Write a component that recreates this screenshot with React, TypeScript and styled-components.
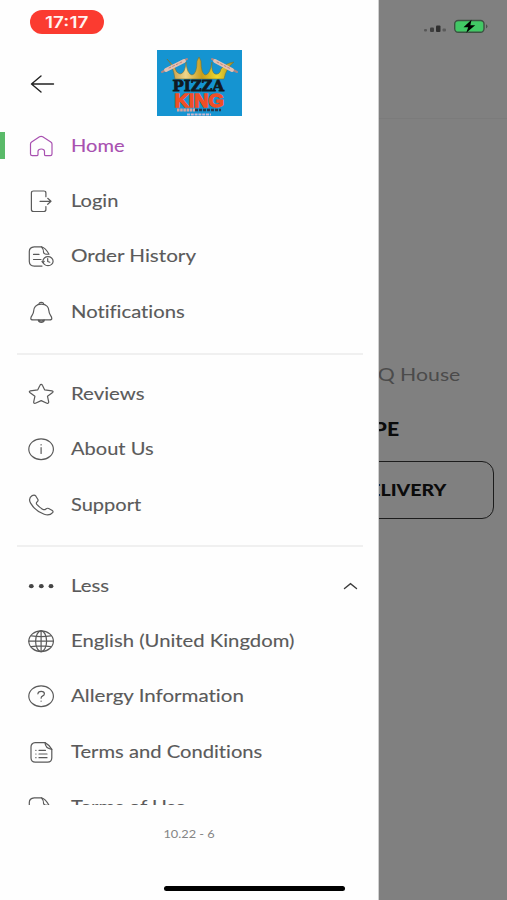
import React from "react";
import styled, { createGlobalStyle } from "styled-components";

const Global = createGlobalStyle`
  * { box-sizing: border-box; }
  html, body { margin: 0; padding: 0; background: #808080; }
  body { font-family: Lato, "Open Sans", sans-serif; font-variant-ligatures: none; }
`;

const Screen = styled.div`
  position: relative;
  width: 507px;
  height: 900px;
  overflow: hidden;
  background: #808080;
`;

const Wide = styled.span<{ $stretch?: number; $origin?: string }>`
  display: inline-block;
  white-space: nowrap;
  transform: scaleX(${(p) => p.$stretch ?? 1.18});
  transform-origin: ${(p) => p.$origin ?? "left"} center;
`;

/* Dimmed page behind the drawer */
const Page = styled.main`
  height: 100%;
  display: flex;
  flex-direction: column;
  align-items: flex-end;
`;

const PageHeader = styled.div`
  width: 100%;
  height: 119px;
  padding: 18px 19px 0 0;
  display: flex;
  justify-content: flex-end;
  align-items: flex-start;
  border-bottom: 1px solid #7b7b7b;
`;

const StoreName = styled.div`
  margin: 242px 47px 0 0;
  font-size: 18px;
  line-height: 26px;
  color: #4b4b4b;
`;

const OrderType = styled.div`
  margin: 29px 108px 0 0;
  font-size: 18px;
  font-weight: 900;
  line-height: 26px;
  color: #0b0b0b;
`;

const DeliveryButton = styled.button`
  margin: 19px 13px 0 0;
  width: 230px;
  height: 58px;
  padding: 0 47px 1px 0;
  border: 1.5px solid #1c1c1c;
  border-radius: 12px;
  background: transparent;
  text-align: right;
  font: 900 16px Lato, sans-serif;
  color: #0b0b0b;
`;

/* Drawer */
const Drawer = styled.aside`
  position: absolute;
  inset: 0 auto 0 0;
  width: 379px;
  display: flex;
  flex-direction: column;
  background: #fefefe;
  border-right: 1px solid #d0d0d0;
`;

const StatusRow = styled.div`
  height: 50px;
  padding: 10px 0 0 30px;
`;

const TimePill = styled.div`
  display: flex;
  align-items: center;
  justify-content: center;
  width: 74px;
  height: 24px;
  padding-top: 1px;
  border-radius: 12px;
  background: #fb3b30;
  color: #fff3f0;
  font: 600 15.5px/24px Inter, sans-serif;
`;

const Header = styled.header`
  display: flex;
  align-items: center;
  gap: 102px;
  height: 66px;
  margin-bottom: 2px;
  padding-left: 30px;
`;

const BackButton = styled.button`
  display: flex;
  padding: 2px 0 0;
  border: 0;
  background: none;
`;

const Menu = styled.nav`
  height: 687px;
  overflow: hidden;
`;

const Row = styled.div<{ $active?: boolean }>`
  display: flex;
  align-items: center;
  height: 55.36px;
  padding: 0 20px 0 ${(p) => (p.$active ? 0 : 27)}px;
  color: ${(p) => (p.$active ? "#a850b0" : "#5a5a5a")};
`;

const ActiveBar = styled.i`
  width: 5px;
  height: 27px;
  margin-right: 22px;
  background: #5aba69;
`;

const Icon = styled.svg`
  flex: none;
  width: 28px;
  height: 24px;
  margin-right: 16px;
  fill: none;
  stroke: currentColor;
  stroke-width: 1.2;
  stroke-linecap: round;
  stroke-linejoin: round;
`;

const Label = styled.div`
  flex: 1;
  font-size: 17px;
  line-height: 24px;
  -webkit-text-stroke: 0.12px currentColor;
`;

const Divider = styled.hr<{ $tight?: boolean }>`
  width: 346px;
  height: 2px;
  margin: ${(p) => (p.$tight ? "12.5px 0 11px 17px" : "14px 0 11px 17px")};
  border: 0;
  background: #f0f0f0;
`;

const Version = styled.div`
  margin-top: 20px;
  padding-left: 1px;
  text-align: center;
  font-size: 11.5px;
  line-height: 18px;
  color: #858585;
`;

const HomeIndicator = styled.div`
  position: absolute;
  left: 164px;
  bottom: 9px;
  width: 181px;
  height: 5px;
  border-radius: 3px;
  background: #000;
`;

const docOutline = (
  <>
    <path d="M14.5 2.8H7.2Q2.3 3.2 2.3 7.4V17.5Q2.5 22 7.2 22.1H15" />
    <path d="M14.5 2.8Q18.5 4 22 10.2 17.2 10.6 16.6 8.6 16.5 4.8 14.5 2.8Z" />
  </>
);

const icons: Record<string, React.ReactNode> = {
  home: (
    <path d="M3.5 10Q3.5 8.7 4.6 8L12.5 2.8Q14.1 1.8 15.7 2.8L23.8 8Q25 8.8 25 10V20Q25 21.7 23.2 21.7H18.9Q17.5 21.7 17.5 20.4V17.2Q17.3 15 14.3 15 11.2 15 11 17.2V20.4Q11 21.7 9.6 21.7H5.3Q3.5 21.7 3.5 20Z" />
  ),
  login: (
    <>
      <path d="M18.9 7.7V4Q18.9 2 16.8 2H6.5Q4.4 2 4.4 4V20.5Q4.4 22.5 6.5 22.5H16.8Q18.9 22.5 18.9 20.5V17.6" />
      <path d="M13 12.3H23.7M20.7 9.3L24 12.3 20.7 15.3" />
    </>
  ),
  history: (
    <>
      {docOutline}
      <path d="M6.5 10.4H12M6.5 15.5H14" />
      <ellipse cx="21" cy="17.2" rx="5.1" ry="4.5" />
      <path d="M20.7 14.7V17.5L22.8 18.2M15 17.5L16 18.7 17.2 17.4" />
    </>
  ),
  bell: (
    <>
      <path d="M12 4.5Q11.7 2.4 14.3 2.4 16.9 2.4 16.6 4.5" />
      <path d="M14.3 4.1C8.8 4.1 6.6 7.6 6.6 11.2 6.6 14.7 3.8 15.7 3.8 18.4Q3.8 19.8 6 19.8H22.6Q24.8 19.8 24.8 18.4C24.8 15.7 22 14.7 22 11.2 22 7.6 19.8 4.1 14.3 4.1Z" />
      <path d="M11.3 20.2Q11.7 22.4 14.3 22.4 16.9 22.4 17.3 20.2L14.3 21Z" />
    </>
  ),
  star: (
    <path d="M14.2 2.4Q15 2.4 15.4 3.3L17.6 7.8 25 8.8Q26.8 9.3 25.6 10.5L20.5 14.3 21.7 19.8Q21.8 21.8 19.9 21.2L14.2 18.6 8.4 21.2Q6.4 21.8 6.7 19.8L7.9 14.3 2.8 10.5Q1.6 9.3 3.4 8.8L10.8 7.8 13 3.3Q13.4 2.4 14.2 2.4Z" />
  ),
  info: (
    <>
      <ellipse cx="14.1" cy="12.2" rx="12.3" ry="10.4" />
      <path d="M14.1 10.7V16.4M14.1 7.6V8" />
    </>
  ),
  phone: (
    <path d="M5.2 2.6C2 4.7 1.8 7 3.6 10.1 6.4 15 11.8 19.4 17.2 21.3 20.8 22.6 23.6 22 25.6 19.6Q26.6 18.5 25.3 17.6L21.7 15.5Q20.3 14.8 18.9 16 17.4 17.3 15.6 16.2 12.3 14.3 9.8 11.4 8.7 9.9 10.2 8.8 11.5 7.8 10.9 6.5L8.9 3.2Q7.6 1.4 5.2 2.6Z" />
  ),
  dots: (
    <g fill="#454545" stroke="none">
      <ellipse cx="4.3" cy="12.2" rx="2.4" ry="2.1" />
      <ellipse cx="14.3" cy="12.2" rx="2.4" ry="2.1" />
      <ellipse cx="24" cy="12.2" rx="2.4" ry="2.1" />
    </g>
  ),
  globe: (
    <>
      <ellipse cx="14.1" cy="12.2" rx="12.3" ry="10.4" />
      <ellipse cx="14.1" cy="12.2" rx="5.5" ry="10.4" />
      <path d="M14.1 1.8V22.6M1.8 12.2H26.4M4.4 6.8Q14.1 8.4 23.8 6.8M4.4 17.6Q14.1 16 23.8 17.6" />
    </>
  ),
  question: (
    <>
      <ellipse cx="14.1" cy="12.2" rx="12.3" ry="10.4" />
      <path d="M10.9 9.8Q11.1 7.3 14.2 7.3 17.4 7.3 17.4 9.7 17.4 11.2 15.4 12.1 14.1 12.7 14.1 14.2M14.1 17V17.2" />
    </>
  ),
  list: (
    <>
      <path d="M18 2.6H8.2Q4 3 4 7V18Q4.2 22 8.2 22.2H20.6Q24.6 22 24.8 18V9.4Q22.5 5 18 2.6Z" />
      <path d="M18 2.6Q18.2 8.6 24.8 9.3M8.8 10.3H9M12 10.3H18.5M8.8 14H9M12 14H20M8.8 17.7H9M12 17.7H20" />
    </>
  ),
  doc: docOutline,
};

type Item = { icon: string; text: string; stretch?: number };

const sections: Item[][] = [
  [
    { icon: "home", text: "Home" },
    { icon: "login", text: "Login" },
    { icon: "history", text: "Order History", stretch: 1.215 },
    { icon: "bell", text: "Notifications", stretch: 1.19 },
  ],
  [
    { icon: "star", text: "Reviews", stretch: 1.2 },
    { icon: "info", text: "About Us" },
    { icon: "phone", text: "Support" },
  ],
  [
    { icon: "dots", text: "Less", stretch: 1.2 },
    { icon: "globe", text: "English (United Kingdom)", stretch: 1.192 },
    { icon: "question", text: "Allergy Information", stretch: 1.208 },
    { icon: "list", text: "Terms and Conditions", stretch: 1.187 },
    { icon: "doc", text: "Terms of Use", stretch: 1.187 },
  ],
];

const Logo = () => (
  <svg width="85" height="66" viewBox="0 0 85 66">
    <defs>
      <linearGradient id="gold" x1="0" x2="1" y1="0" y2="0">
        <stop offset="0" stopColor="#b88a32" />
        <stop offset=".28" stopColor="#eed58b" />
        <stop offset=".52" stopColor="#c79d1b" />
        <stop offset=".75" stopColor="#f0d92f" />
        <stop offset="1" stopColor="#a98b22" />
      </linearGradient>
    </defs>
    <rect width="85" height="66" fill="#1594d1" />
    <path
      d="M10 9Q16 15 18 29H67Q69 18 77 12 69 13 64 19 63 25 58 24 54 22 55 12Q53 25 48 25 44 23 44 11L42 7 40 11Q40 24 35 25 30 24 29 12 28 24 23 24 19 23 18 18 15 14 10 9Z"
      fill="url(#gold)"
      stroke="#6f743e"
      strokeWidth=".6"
    />
    <g strokeLinecap="round">
      <path d="M5 22L30 9M55 9L80 22" stroke="#a98787" strokeWidth="2" />
      <path d="M9 20L27 11M58 11L75 20" stroke="#e3c2b4" strokeWidth="3.8" />
      <path d="M12 18L26 11.5M60 12L74 19" stroke="#c08478" strokeWidth="1" strokeDasharray="2 2" />
    </g>
    <text x="15.5" y="40.5" fontFamily="DejaVu Serif, serif" fontWeight="700" fontSize="15" textLength="51.5" lengthAdjust="spacingAndGlyphs" fill="#101a21" stroke="#101a21" strokeWidth=".8">
      PIZZA
    </text>
    <text x="17.5" y="56.5" fontFamily="Liberation Sans, sans-serif" fontWeight="700" fontSize="18" textLength="49.5" lengthAdjust="spacingAndGlyphs" fill="#f04e26" stroke="#f04e26" strokeWidth="1.3">
      KING
    </text>
    <path d="M20 60H38" stroke="#d9a3a0" strokeWidth="3" strokeDasharray="2.5 .7" />
    <path d="M38 60H64" stroke="#243b50" strokeWidth="2.6" strokeDasharray="3 1" />
    <path d="M30 64.5H54" stroke="#c9b7d0" strokeWidth="2" strokeDasharray="3 .8" />
  </svg>
);

const StatusIcons = () => (
  <svg width="66" height="18" viewBox="0 0 66 18">
    <g fill="#3f3f3f">
      <rect x="2" y="11" width="3" height="2.5" rx="1" fill="#575757" />
      <rect x="8" y="9.5" width="4" height="4.5" rx="1" />
      <rect x="14" y="7.5" width="4.5" height="6.5" rx="1" fill="#303030" />
      <rect x="20.5" y="10.5" width="3.5" height="3" rx="1" fill="#5a5a5a" />
    </g>
    <rect x="32.7" y="2.5" width="29.3" height="11.8" rx="3.5" fill="#42c865" stroke="#3d5142" strokeWidth="1.4" />
    <path d="M64 6.3Q67 8.4 64 10.5Z" fill="#465549" />
    <path d="M49.5 1.8L41.5 9.2H46.2L44.3 14.8 53.2 7.2H48.4Z" fill="#000" />
  </svg>
);

export default function App() {
  return (
    <>
      <Global />
      <Screen>
        <Page>
          <PageHeader>
            <StatusIcons />
          </PageHeader>
          <StoreName>
            <Wide $origin="right">BBQ House</Wide>
          </StoreName>
          <OrderType>
            <Wide $origin="right">ORDER TYPE</Wide>
          </OrderType>
          <DeliveryButton>
            <Wide $origin="right" $stretch={1.22}>DELIVERY</Wide>
          </DeliveryButton>
        </Page>
        <Drawer>
          <StatusRow>
            <TimePill>
              <Wide $stretch={1.22} $origin="center">17:17</Wide>
            </TimePill>
          </StatusRow>
          <Header>
            <BackButton aria-label="Back">
              <svg width="25" height="20" viewBox="0 0 25 20" fill="none" stroke="#222" strokeWidth="1.4" strokeLinecap="round" strokeLinejoin="round">
                <path d="M23.5 10H1.5M11 2L1.5 10 11 18" />
              </svg>
            </BackButton>
            <Logo />
          </Header>
          <Menu>
            {sections.map((rows, i) => (
              <React.Fragment key={i}>
                {i > 0 && <Divider $tight={i === 2} />}
                {rows.map(({ icon, text, stretch }) => (
                  <Row key={text} $active={icon === "home"}>
                    {icon === "home" && <ActiveBar />}
                    <Icon viewBox="0 0 28 24">{icons[icon]}</Icon>
                    <Label>
                      <Wide $stretch={stretch}>{text}</Wide>
                    </Label>
                    {icon === "dots" && (
                      <svg width="15" height="8" viewBox="0 0 15 8" fill="none" stroke="#3c3c3c" strokeWidth="1.4" strokeLinecap="round">
                        <path d="M1.5 6.5L7.5 1.7 13.5 6.5" />
                      </svg>
                    )}
                  </Row>
                ))}
              </React.Fragment>
            ))}
          </Menu>
          <Version>
            <Wide $origin="center" $stretch={1.11}>10.22 - 6</Wide>
          </Version>
        </Drawer>
        <HomeIndicator />
      </Screen>
    </>
  );
}
